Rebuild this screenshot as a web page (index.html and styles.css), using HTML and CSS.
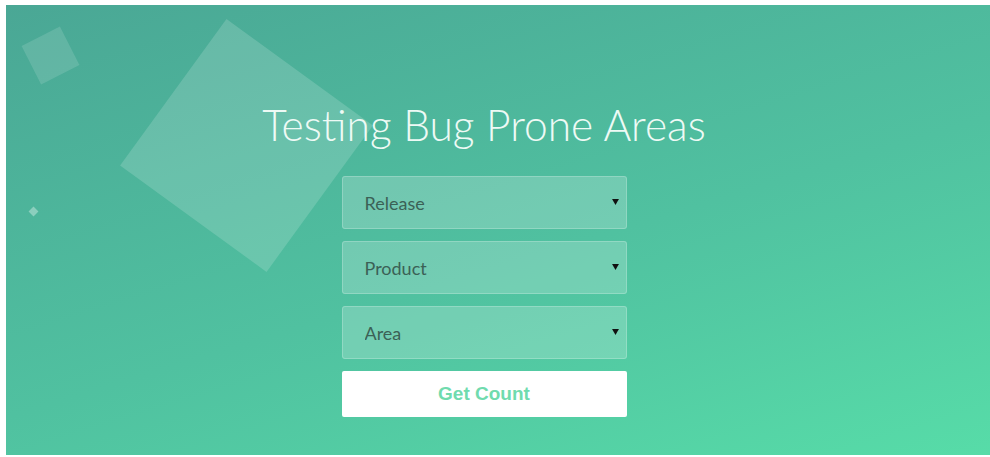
FILE: index.html
```html
<!DOCTYPE html>
<html lang="en">
<head>
<meta charset="utf-8">
<title>Testing Bug Prone Areas</title>
<link rel="stylesheet" href="styles.css">
</head>
<body>
<main class="hero">
  <span class="shape shape-big"></span>
  <span class="shape shape-small"></span>
  <span class="shape shape-dot"></span>

  <h1 class="title">Testing Bug Prone Areas</h1>

  <form class="query">
    <div class="field">
      <select class="picker" name="release">
        <option>Release</option>
      </select>
      <svg class="caret" viewBox="0 0 8 7" width="7" height="6"><path d="M0 0H8L4 7Z"/></svg>
    </div>
    <div class="field">
      <select class="picker" name="product">
        <option>Product</option>
      </select>
      <svg class="caret" viewBox="0 0 8 7" width="7" height="6"><path d="M0 0H8L4 7Z"/></svg>
    </div>
    <div class="field">
      <select class="picker" name="area">
        <option>Area</option>
      </select>
      <svg class="caret" viewBox="0 0 8 7" width="7" height="6"><path d="M0 0H8L4 7Z"/></svg>
    </div>
    <button type="button" class="submit">Get Count</button>
  </form>
</main>
</body>
</html>
```

FILE: styles.css
```css
html, body {
  margin: 0;
  height: 100%;
  background: #ffffff;
}

body {
  padding: 5px 0 2px 6px;
  box-sizing: border-box;
}

.hero {
  position: relative;
  overflow: hidden;
  height: 100%;
  box-sizing: border-box;
  display: flex;
  flex-direction: column;
  align-items: center;
  padding-top: 94px;
  padding-right: 28px;
  background: linear-gradient(163deg, #4aa795 0%, #50c1a0 55%, #57dca8 100%);
  font-family: "Lato", "Open Sans", sans-serif;
}

/* floating background squares */
.shape {
  position: absolute;
  background: rgba(255, 255, 255, 0.16);
}

.shape-big {
  width: 181px;
  height: 181px;
  left: 150px;
  top: 50px;
  transform: rotate(36deg);
}

.shape-small {
  width: 43px;
  height: 43px;
  left: 23px;
  top: 29px;
  transform: rotate(-27deg);
  background: rgba(255, 255, 255, 0.13);
}

.shape-dot {
  width: 7px;
  height: 7px;
  left: 24px;
  top: 203px;
  transform: rotate(45deg);
  background: rgba(255, 255, 255, 0.35);
}

.title {
  position: relative;
  margin: 0 0 25px;
  font-weight: 300;
  font-size: 42.5px;
  line-height: 52px;
  color: #eefaf5;
}

.query {
  position: relative;
  width: 285px;
  display: flex;
  flex-direction: column;
  gap: 12px;
}

.field {
  position: relative;
}

.picker {
  appearance: none;
  -webkit-appearance: none;
  display: block;
  width: 100%;
  height: 53px;
  margin: 0;
  padding: 0 30px 0 22px;
  border: 1px solid rgba(255, 255, 255, 0.22);
  border-radius: 3px;
  background: rgba(255, 255, 255, 0.2);
  font-family: "Lato", "Open Sans", sans-serif;
  font-size: 18px;
  font-weight: 400;
  color: #3b6156;
  outline: none;
}

.caret {
  position: absolute;
  right: 8px;
  top: 23px;
  fill: #111;
  pointer-events: none;
}

.submit {
  height: 46px;
  border: 0;
  border-radius: 2px;
  background: #ffffff;
  font-family: "Liberation Sans", Arial, sans-serif;
  font-weight: 700;
  font-size: 19px;
  color: #70dbae;
  cursor: pointer;
}
```
